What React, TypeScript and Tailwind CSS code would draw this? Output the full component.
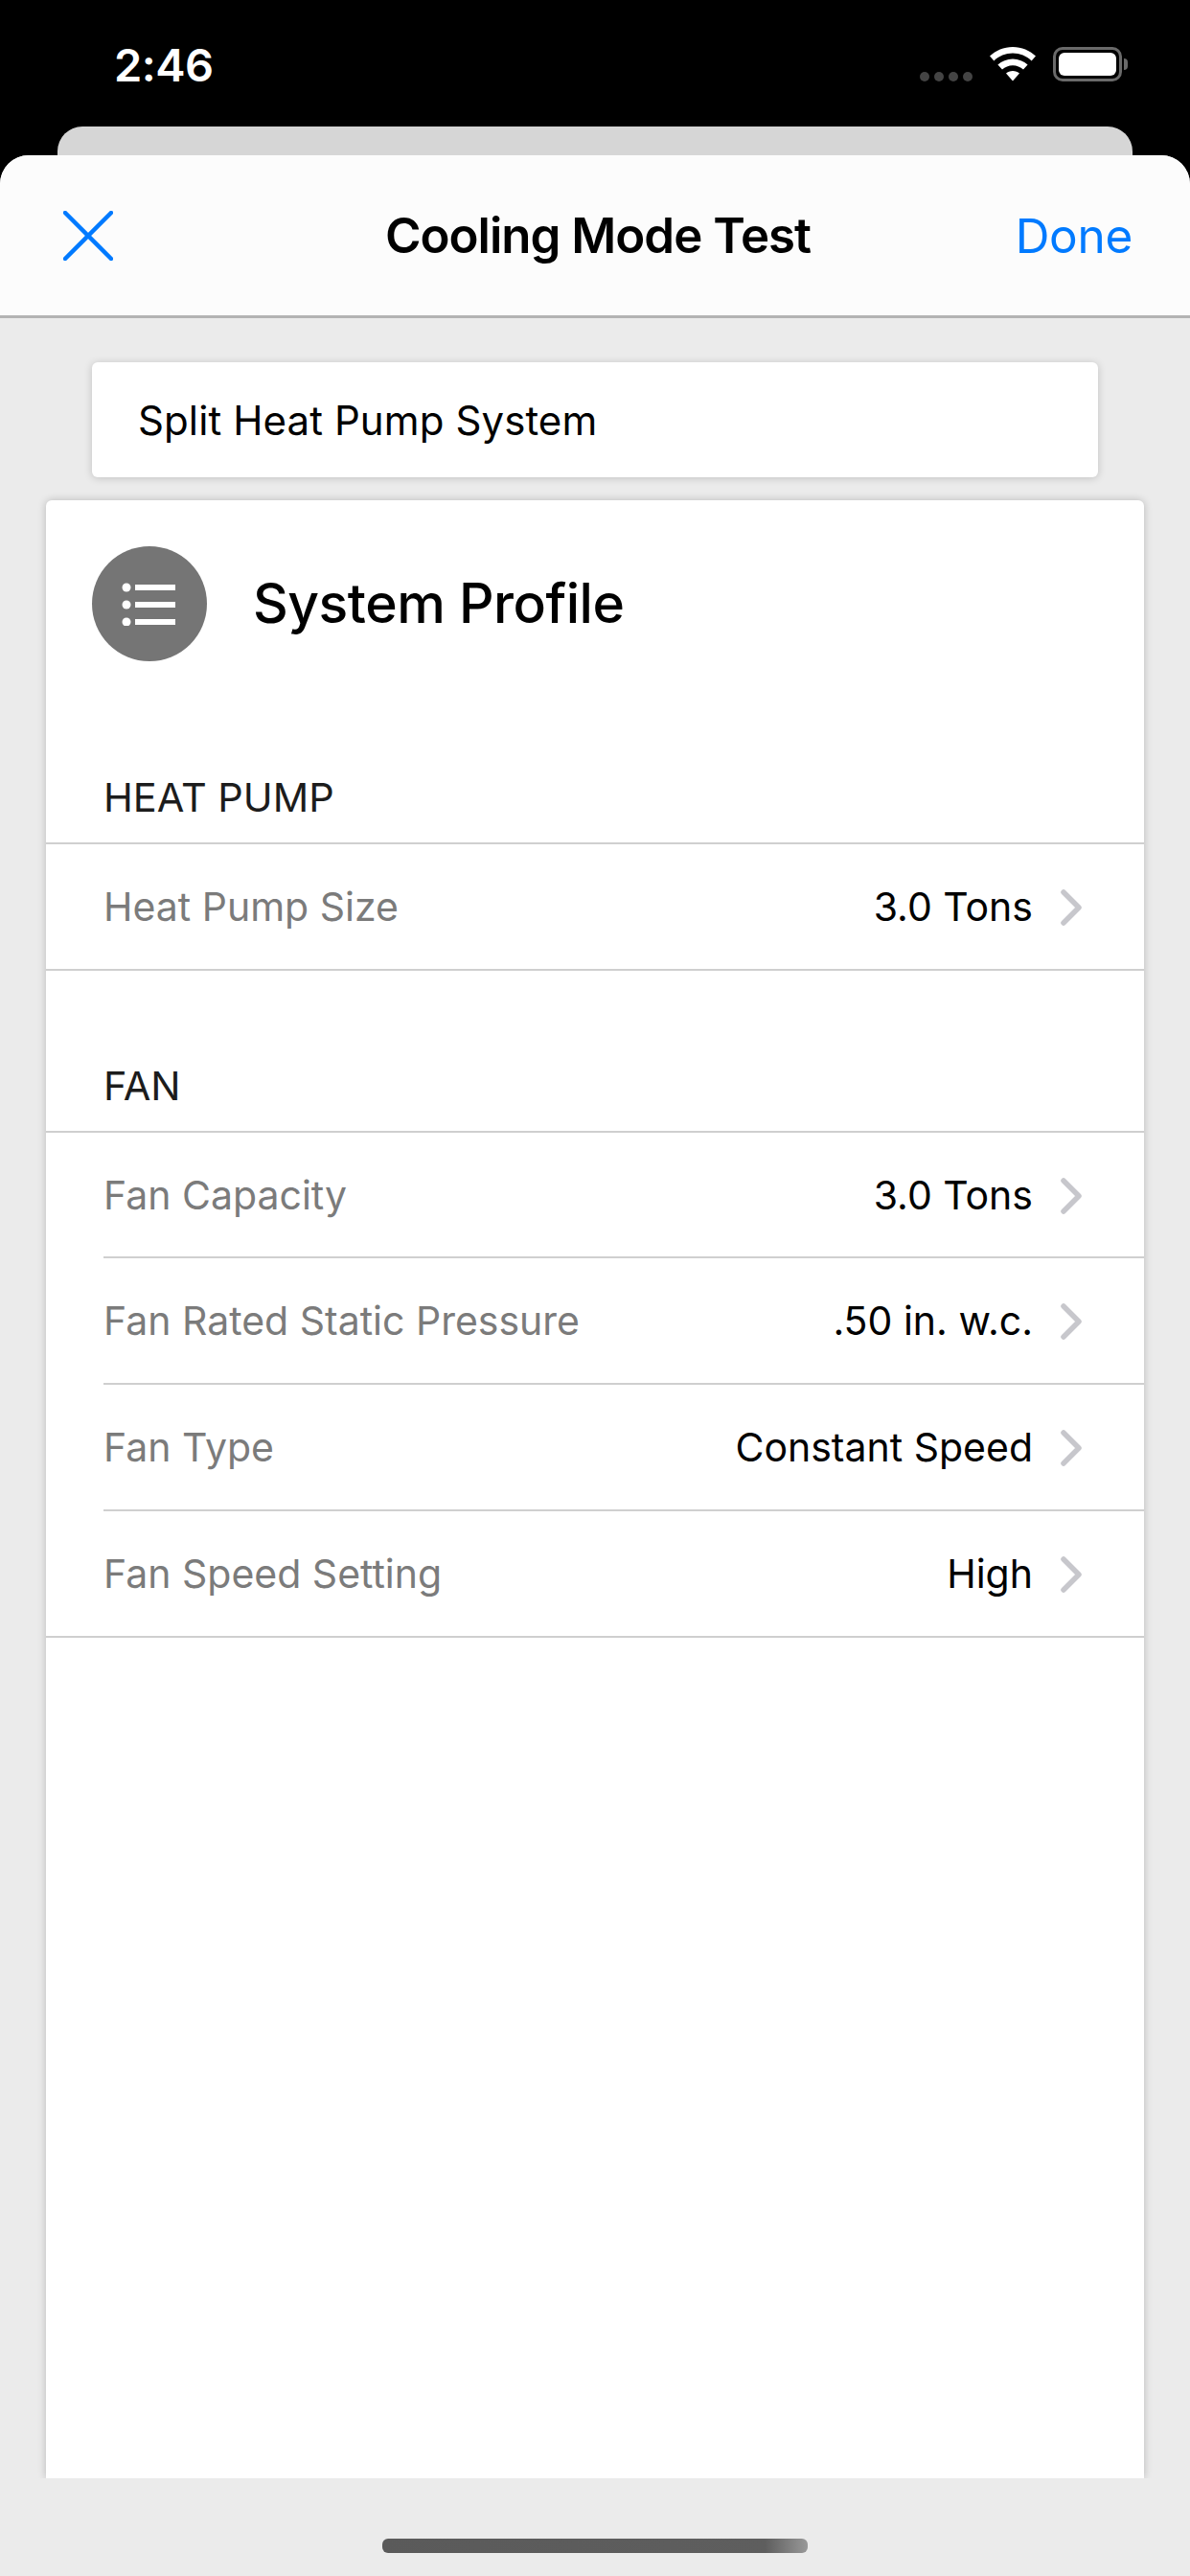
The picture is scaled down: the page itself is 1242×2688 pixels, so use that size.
const F = "font-['Inter','Liberation_Sans',sans-serif]";

function Chevron() {
  return (
    <svg width="23" height="38" viewBox="0 0 23 38" className="shrink-0" fill="none">
      <path d="M3 3 L19 19 L3 35" stroke="#c7c7cc" strokeWidth="5.5" strokeLinecap="round" strokeLinejoin="round" />
    </svg>
  );
}

function Row({ label, value, last, h }: { label: string; value: string; last?: boolean; h: string }) {
  return (
    <div className={`${last ? "" : "pl-[60px]"}`}>
      <div className={`flex items-center border-b-2 border-[#cfcfcf] pt-[2px] ${last ? "pl-[60px]" : ""} pr-[64px] ${h}`}>
        <span className="flex-1 text-[41px] text-[#7b7b7b]">{label}</span>
        <span className="mr-[29px] text-[41px] text-black">{value}</span>
        <Chevron />
      </div>
    </div>
  );
}

function Section({ title }: { title: string }) {
  return (
    <div className="flex h-[72px] items-start border-b-2 border-[#cfcfcf] pl-[60px]">
      <span className="text-[41.5px] leading-[47px] text-[#1c1c1c]">{title}</span>
    </div>
  );
}

export default function App() {
  return (
    <div className={`${F} flex h-[2688px] w-[1242px] flex-col overflow-hidden bg-black`}>
      <div className="flex h-[132px] shrink-0 items-start justify-between pl-[119px] pr-[65px] pt-[40px]">
        <span className="text-[47px] font-semibold leading-[56px] tracking-[-0.5px] text-white">2:46</span>
        <div className="flex items-start pt-[9px]">
          <div className="mr-[18px] mt-[26px] flex gap-[5px]">
            <span className="h-[10px] w-[10px] rounded-full bg-[#444]" />
            <span className="h-[10px] w-[10px] rounded-full bg-[#444]" />
            <span className="h-[10px] w-[10px] rounded-full bg-[#444]" />
            <span className="h-[10px] w-[10px] rounded-full bg-[#444]" />
          </div>
          <svg width="48" height="36" viewBox="0 0 48 36" className="mr-[18px]">
            <path d="M24 0C14.5 0 6.5 3.6 0 9.6L4.4 14.4C9.8 9.4 16.4 6.6 24 6.6S38.2 9.4 43.6 14.4L48 9.6C41.5 3.6 33.5 0 24 0Z" fill="#fff" />
            <path d="M24 12.4C18 12.4 12.6 14.7 8.4 18.6L13 23.6C16 20.9 19.8 19.2 24 19.2S32 20.9 35 23.6L39.6 18.6C35.4 14.7 30 12.4 24 12.4Z" fill="#fff" />
            <path d="M24 25C21.2 25 18.8 26 17 27.6L24 35.4L31 27.6C29.2 26 26.8 25 24 25Z" fill="#fff" />
          </svg>
          <div className="flex items-center">
            <div className="flex h-[36px] w-[72px] rounded-[10px] border-[3px] border-[#6a6a6a] p-[3px]">
              <div className="flex-1 rounded-[6px] bg-white" />
            </div>
            <div className="ml-[2px] h-[12px] w-[4px] rounded-r-full bg-[#6a6a6a]" />
          </div>
        </div>
      </div>

      <div className="mx-[60px] h-[30px] shrink-0 rounded-t-[26px] bg-[#d6d6d6]" />

      <div className="flex flex-1 flex-col overflow-hidden rounded-t-[30px] bg-[#ebebeb]">
        <header className="grid h-[170px] shrink-0 grid-cols-[1fr_auto_1fr] items-center border-b-[3px] border-[#b3b3b3] bg-[#fcfcfc] pl-[66px] pr-[60px]">
          <svg width="52" height="52" viewBox="0 0 52 52" fill="none">
            <path d="M2 2 L50 50 M50 2 L2 50" stroke="#007aff" strokeWidth="4.5" strokeLinecap="round" />
          </svg>
          <span className="text-[51px] font-semibold leading-[60px] tracking-[-1px] text-black">Cooling Mode Test</span>
          <span className="justify-self-end text-[49.5px] leading-[60px] tracking-[-0.3px] text-[#007aff]">Done</span>
        </header>

        <div className="flex min-h-0 flex-1 flex-col px-[48px] pt-[46px]">
          <div className="mx-[48px] flex h-[120px] shrink-0 items-center rounded-[6px] bg-white pl-[48px] shadow-[0_1px_8px_rgba(0,0,0,0.18)]">
            <span className="text-[42px] tracking-[0.1px] text-black">Split Heat Pump System</span>
          </div>

          <div className="mt-[24px] h-[2064px] shrink-0 rounded-t-[6px] bg-white shadow-[0_0_8px_rgba(0,0,0,0.22)]">
            <div className="flex items-center pl-[48px] pt-[48px]">
              <div className="flex h-[120px] w-[120px] shrink-0 items-center justify-center rounded-full bg-[#757575]">
                <svg width="58" height="46" viewBox="0 0 58 46" fill="#fff">
                  <circle cx="5" cy="6" r="4.5" />
                  <circle cx="5" cy="24" r="4.5" />
                  <circle cx="5" cy="42" r="4.5" />
                  <rect x="14" y="3" width="42" height="6" />
                  <rect x="14" y="21" width="42" height="6" />
                  <rect x="14" y="39" width="42" height="6" />
                </svg>
              </div>
              <span className="ml-[48px] text-[57px] font-[450] tracking-[-0.5px] text-black">System Profile</span>
            </div>

            <div className="mt-[119px]">
              <Section title="HEAT PUMP" />
              <Row label="Heat Pump Size" value="3.0 Tons" last h="h-[132px]" />
            </div>
            <div className="mt-[97px]">
              <Section title="FAN" />
              <Row label="Fan Capacity" value="3.0 Tons" h="h-[131px]" />
              <Row label="Fan Rated Static Pressure" value=".50 in. w.c." h="h-[132px]" />
              <Row label="Fan Type" value="Constant Speed" h="h-[132px]" />
              <Row label="Fan Speed Setting" value="High" last h="h-[132px]" />
            </div>
          </div>
        </div>

        <div className="flex h-[102px] shrink-0 justify-center bg-[#ebebeb] pt-[63px]">
          <div className="h-[15px] w-[444px] rounded-[6px] bg-gradient-to-r from-[#5a5a5a] via-[#5e5e5e] via-90% to-[#999999]" />
        </div>
      </div>
    </div>
  );
}
